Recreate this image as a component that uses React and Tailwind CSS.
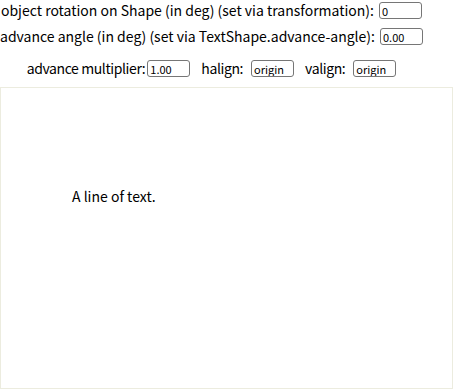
export default function App() {
  const inputCls = "w-[43px] h-[17px] border border-[#767676] rounded-[3px] px-[2px] text-[11px] outline-none";
  return (
    <div className="w-[453px] h-[389px] bg-white text-black text-[14px] leading-none overflow-hidden" style={{ fontFamily: '"Noto Sans CJK JP", "Noto Sans", sans-serif' }}>
      <div className="w-[423px] flex flex-col items-center pt-[2px]">
        <div className="flex items-center whitespace-nowrap h-[17px]">
          <span className="-mt-[2px]">object rotation on Shape (in deg) (set via transformation):</span>
          <input defaultValue="0" className={`ml-[5px] ${inputCls}`} />
        </div>
        <div className="flex items-center whitespace-nowrap h-[17px] mt-[9px]">
          <span className="-mt-[2px]">advance angle (in deg) (set via TextShape.advance-angle):</span>
          <input defaultValue="0.00" className={`ml-[5px] ${inputCls}`} />
        </div>
        <div className="flex items-center whitespace-nowrap h-[17px] mt-[15px] tracking-[-0.4px]">
          <span className="-mt-[2px]">advance multiplier:</span>
          <input defaultValue="1.00" className={`ml-[2px] tracking-normal ${inputCls}`} />
          <span className="-mt-[2px] ml-[11px]">halign:</span>
          <input defaultValue="origin" className={`ml-[8px] tracking-normal ${inputCls}`} />
          <span className="-mt-[2px] ml-[11px]">valign:</span>
          <input defaultValue="origin" className={`ml-[8px] tracking-normal ${inputCls}`} />
        </div>
      </div>
      <div className="mt-[10px] h-[302px] border border-[#ececdf] relative">
        <span className="absolute left-[71px] top-[101px]">A line of text.</span>
      </div>
    </div>
  );
}
